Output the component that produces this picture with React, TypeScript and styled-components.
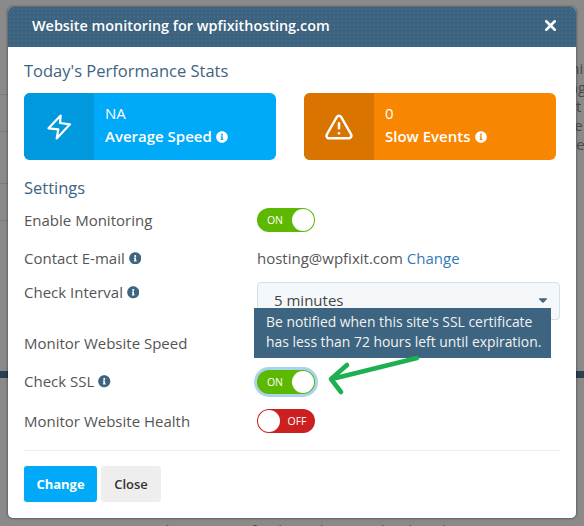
import React from "react"
import styled, { createGlobalStyle } from "styled-components"
import { TriangleAlert, X } from "lucide-react"
import { FaInfoCircle, FaCaretDown } from "react-icons/fa"

const GlobalStyle = createGlobalStyle`
  html, body {
    margin: 0;
    padding: 0;
    background: #8a8a8a;
  }
  body {
    font-family: "Open Sans", "Liberation Sans", sans-serif;
  }
`

type ToggleProps = { on?: boolean; focused?: boolean }

const Toggle: React.FC<ToggleProps> = ({ on, focused }) => (
  <Switch $on={on} $focused={focused}>
    {on && <SwitchLabel>ON</SwitchLabel>}
    <Knob />
    {!on && <SwitchLabel>OFF</SwitchLabel>}
  </Switch>
)

const Info: React.FC = () => (
  <InfoMark>
    <FaInfoCircle />
  </InfoMark>
)

const App: React.FC = () => {
  return (
    <Page>
      <GlobalStyle />
      <Behind>
        <BehindTop>
          <BehindRules>
            <Rule $gap={94} />
            <Rule $gap={36} />
            <Rule $gap={51} />
            <Rule $gap={36} />
          </BehindRules>
          <BehindText>
            <span>this</span>
            <span>ing</span>
            <span>ist</span>
            <span>ite</span>
            <span>ive</span>
          </BehindText>
        </BehindTop>
        <DarkBar />
        <BehindFooter>the version of it the website and its listed</BehindFooter>
      </Behind>

      <Modal>
        <ModalHeader>
          <ModalTitle>Website monitoring for wpfixithosting.com</ModalTitle>
          <CloseIcon>
            <X size={17} strokeWidth={3.6} />
          </CloseIcon>
        </ModalHeader>

        <ModalBody>
          <Heading>Today's Performance Stats</Heading>
          <Stats>
            <StatCard $color="#00aaf9">
              <StatIcon $color="#0099dd">
                <svg viewBox="0 0 25 26" width="25" height="26">
                  <path
                    d="M13.7 1.5 L1.5 14.3 L11.3 15.3 L9.7 24.5 L23 10.3 L13 9 Z"
                    fill="none"
                    stroke="#fff"
                    strokeWidth="2.2"
                    strokeLinejoin="round"
                  />
                </svg>
              </StatIcon>
              <StatText>
                <span>NA</span>
                <StatName>
                  Average Speed <FaInfoCircle size={12} />
                </StatName>
              </StatText>
            </StatCard>
            <StatCard $color="#f98600">
              <StatIcon $color="#d97400">
                <TriangleAlert size={30} strokeWidth={2} />
              </StatIcon>
              <StatText>
                <span>0</span>
                <StatName>
                  Slow Events <FaInfoCircle size={12} />
                </StatName>
              </StatText>
            </StatCard>
          </Stats>

          <SettingsHeading>Settings</SettingsHeading>
          <Row $height={38}>
            <Label>Enable Monitoring</Label>
            <Toggle on />
          </Row>
          <Row $height={38}>
            <Label>
              Contact E-mail <Info />
            </Label>
            <Value>
              hosting@wpfixit.com <ChangeLink href="#">Change</ChangeLink>
            </Value>
          </Row>
          <IntervalRow>
            <Label>
              Check Interval <Info />
            </Label>
            <Select>
              5 minutes
              <FaCaretDown size={14} color="#4d6578" />
            </Select>
          </IntervalRow>
          <Row $height={38}>
            <Label>Monitor Website Speed</Label>
            <span />
          </Row>
          <Row $height={39}>
            <Label>
              Check SSL <Info />
            </Label>
            <Toggle on focused />
          </Row>
          <Row $height={40}>
            <Label>Monitor Website Health</Label>
            <Toggle />
          </Row>

          <Divider />
          <Actions>
            <PrimaryButton>Change</PrimaryButton>
            <SecondaryButton>Close</SecondaryButton>
          </Actions>

          <Tooltip>
            Be notified when this site's SSL certificate
            <br />
            has less than 72 hours left until expiration.
          </Tooltip>
          <Arrow viewBox="0 0 100 44" width="100" height="44">
            <path
              d="M93 4 L8 25 M23 11 L7 25 L17 38"
              fill="none"
              stroke="#1cb052"
              strokeWidth="4.6"
              strokeLinecap="round"
              strokeLinejoin="round"
            />
          </Arrow>
        </ModalBody>
      </Modal>
    </Page>
  )
}

const Page = styled.div`
  position: relative;
  width: 584px;
  height: 526px;
  overflow: hidden;
  background: #8a8a8a;
`

const Behind = styled.div`
  display: flex;
  flex-direction: column;
  height: 100%;
  color: #4a4a4a;
  font-size: 15px;
`

const BehindTop = styled.div`
  display: flex;
  justify-content: space-between;
  height: 371px;
`

const BehindRules = styled.div`
  width: 10px;
`

const Rule = styled.div<{ $gap: number }>`
  margin-top: ${(p) => p.$gap}px;
  height: 1px;
  background: #7b7b7b;
`

const BehindText = styled.div`
  display: flex;
  flex-direction: column;
  width: 19px;
  padding-top: 59px;
  line-height: 19px;
  overflow: hidden;
`

const DarkBar = styled.div`
  height: 7px;
  background: #2b3f4e;
`

const BehindFooter = styled.div`
  margin-top: auto;
  margin-bottom: -13px;
  padding-left: 160px;
  line-height: 18px;
`

const Modal = styled.div`
  position: absolute;
  top: 7px;
  left: 8px;
  display: flex;
  flex-direction: column;
  width: 568px;
  height: 511px;
  border-radius: 5px;
  background: #fff;
  box-shadow: 0 0 3px rgba(0, 0, 0, 0.6);
  overflow: hidden;
`

const ModalHeader = styled.div`
  display: flex;
  align-items: center;
  justify-content: space-between;
  box-sizing: border-box;
  height: 40px;
  padding: 0 17px 3px 24px;
  background-color: #3b627e;
  background-image: radial-gradient(rgba(255, 255, 255, 0.05) 1px, transparent 1px);
  background-size: 4px 4px;
  color: #fff;
`

const ModalTitle = styled.div`
  font-size: 14.4px;
  font-weight: 600;
`

const CloseIcon = styled.span`
  display: flex;
`

const ModalBody = styled.div`
  position: relative;
  flex: 1;
  padding: 13px 16px 0;
  color: #555;
  font-size: 15px;
`

const Heading = styled.div`
  height: 22px;
  font-size: 16.5px;
  line-height: 22px;
  color: #3d6480;
`

const SettingsHeading = styled(Heading)`
  margin-top: 17px;
  margin-bottom: 2px;
`

const Stats = styled.div`
  display: flex;
  gap: 28px;
  margin-top: 11px;
  width: 532px;
`

const StatCard = styled.div<{ $color: string }>`
  display: flex;
  flex: 1;
  height: 67px;
  border-radius: 6px;
  background: ${(p) => p.$color};
  color: #fff;
  overflow: hidden;
`

const StatIcon = styled.div<{ $color: string }>`
  display: flex;
  align-items: center;
  justify-content: center;
  width: 70px;
  background: ${(p) => p.$color};
`

const StatText = styled.div`
  display: flex;
  flex-direction: column;
  justify-content: center;
  padding: 0 0 3px 11px;
  line-height: 23px;
`

const StatName = styled.div`
  display: flex;
  align-items: center;
  gap: 4px;
  font-weight: 600;
`

const Row = styled.div<{ $height: number }>`
  display: grid;
  grid-template-columns: 233px 1fr;
  align-items: center;
  height: ${(p) => p.$height}px;
`

const IntervalRow = styled.div`
  display: grid;
  grid-template-columns: 233px 1fr;
  align-items: start;
  height: 47px;
  padding-top: 5px;
  box-sizing: border-box;
`

const Label = styled.div`
  display: flex;
  align-items: center;
  gap: 4px;
  line-height: 21px;
`

const InfoMark = styled.span`
  display: inline-flex;
  color: #3d6480;
  font-size: 12.5px;
`

const Value = styled.div`
  line-height: 21px;
  color: #555;
`

const ChangeLink = styled.a`
  color: #337ab7;
  text-decoration: none;
`

const Select = styled.div`
  display: flex;
  align-items: center;
  justify-content: space-between;
  box-sizing: border-box;
  width: 303px;
  height: 38px;
  padding: 0 9px 2px 16px;
  border: 1px solid #d3e0e8;
  border-radius: 4px;
  background: #f5f8fa;
  color: #444;
`

const Switch = styled.div<{ $on?: boolean; $focused?: boolean }>`
  display: flex;
  align-items: center;
  justify-content: space-between;
  box-sizing: border-box;
  width: 58px;
  height: 24px;
  padding: 0 1px;
  border-radius: 12px;
  background: ${(p) => (p.$on ? "#5cb800" : "#cc1f1f")};
  box-shadow: ${(p) => (p.$focused ? "0 0 0 3px #a8d4f0" : "none")};
`

const SwitchLabel = styled.span`
  flex: 1;
  text-align: center;
  font-size: 10.5px;
  font-weight: 400;
  color: #fff;
`

const Knob = styled.span`
  width: 22px;
  height: 22px;
  border-radius: 50%;
  background: #fff;
`

const Divider = styled.div`
  height: 1px;
  margin-top: 9px;
  width: 536px;
  background: #eee;
`

const Actions = styled.div`
  display: flex;
  gap: 4px;
  margin-top: 15px;
`

const Button = styled.button`
  height: 36px;
  padding: 0 12px;
  border: 0;
  border-radius: 3px;
  font-family: inherit;
  font-size: 13px;
  font-weight: 700;
`

const PrimaryButton = styled(Button)`
  width: 73px;
  background: #00aaf9;
  color: #fff;
`

const SecondaryButton = styled(Button)`
  width: 60px;
  background: #eee;
  color: #333;
  font-weight: 600;
`

const Tooltip = styled.div`
  position: absolute;
  top: 261px;
  left: 246px;
  box-sizing: border-box;
  width: 297px;
  height: 50px;
  padding: 4px 12px;
  background: #3d6480;
  color: #f2f2f2;
  font-size: 13.9px;
  line-height: 20px;
  white-space: nowrap;
`

const Arrow = styled.svg`
  position: absolute;
  top: 307px;
  left: 316px;
`

export default App
